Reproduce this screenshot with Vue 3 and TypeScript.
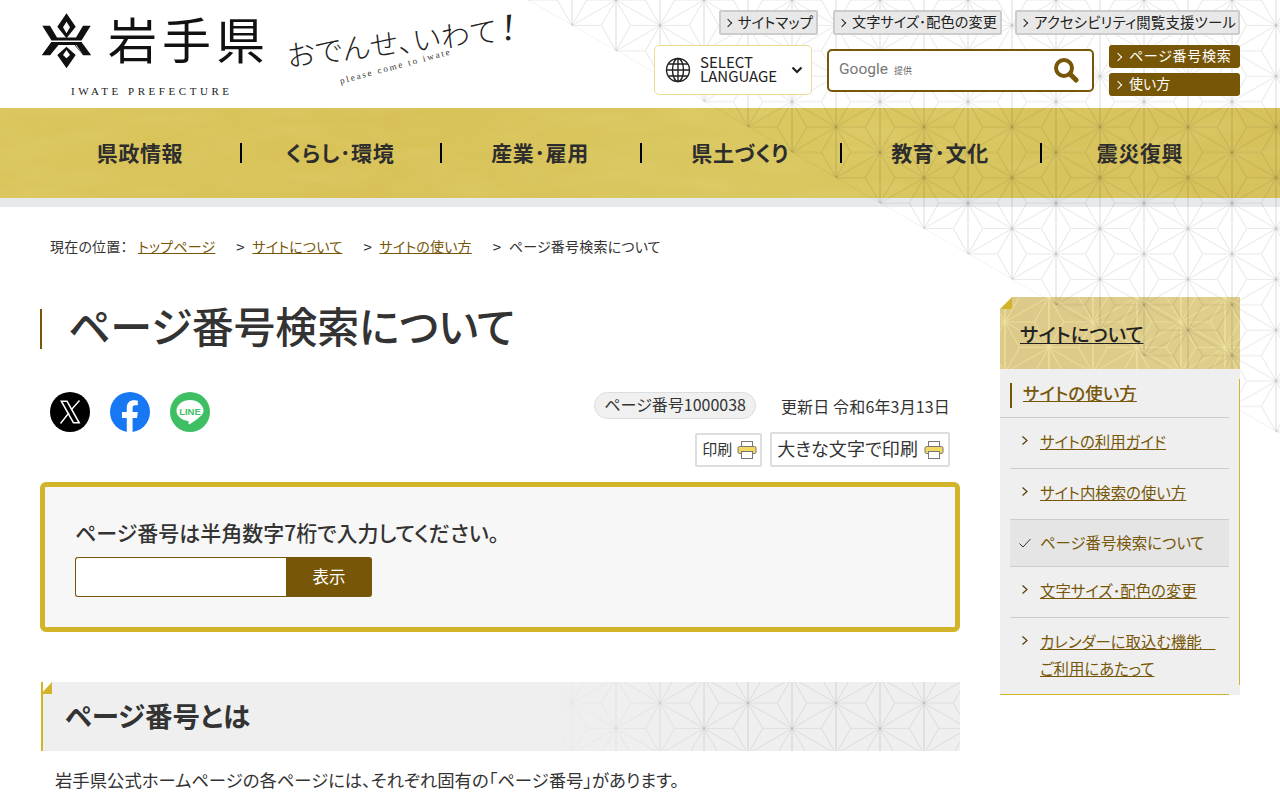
<script setup lang="ts">
const nav: string[] = ['県政情報', 'くらし･環境', '産業･雇用', '県土づくり', '教育･文化', '震災復興']
const sideItems: { label: string[]; current?: boolean }[] = [
  { label: ['サイトの利用ガイド'] },
  { label: ['サイト内検索の使い方'] },
  { label: ['ページ番号検索について'], current: true },
  { label: ['文字サイズ･配色の変更'] },
  { label: ['カレンダーに取込む機能    ', 'ご利用にあたって'] },
]
const topLinks: string[] = ['サイトマップ', '文字サイズ･配色の変更', 'アクセシビリティ閲覧支援ツール']
</script>

<template>
  <div class="page">
    <svg class="asanoha" width="1280" height="800" aria-hidden="true">
      <defs>
        <pattern id="asa" width="88" height="50.8" patternUnits="userSpaceOnUse">
          <g fill="none" stroke="#000" stroke-opacity="0.088">
            <path d="M0 0V50.8M88 0V50.8M44 0V50.8" stroke-width="1.6" />
            <path d="M0 0L44 25.4L88 0M0 50.8L44 25.4L88 50.8" />
            <path d="M0 0L14.67 25.4L0 50.8M14.67 25.4H73.33M88 0L73.33 25.4L88 50.8" />
            <path d="M0 0H29.33L44 25.4L29.33 50.8H0M88 0H58.67L44 25.4L58.67 50.8H88" />
          </g>
        </pattern>
      </defs>
      <polygon points="528,0 1280,0 1280,434" fill="url(#asa)" />
    </svg>

    <header class="header">
      <div class="brand">
        <div class="logo">
          <div class="logo-main">
            <svg class="emblem" width="49" height="58" viewBox="0 0 49 58" aria-hidden="true">
              <path fill-rule="evenodd" d="M24.500 1.300L33.700 14.700L24.500 26.300L15.300 14.700ZM24.500 9.700L21 15.300L24.500 21.300L28 15.300Z" />
              <path fill-rule="evenodd" d="M24.500 34.700L33.700 43L24.500 56.300L15.300 43ZM24.500 38L21 43L24.500 46.300L28 43Z" />
              <path d="M0.300 13.700H8L15 25.500H34L41 13.700H48.700L39.500 28.500H9.500Z" />
              <path d="M9.500 30H39.500V33H33.500L41 43H49V43.300H41L32.500 33H16.500L8 43.300H0L9.500 30Z" />
              <path d="M9.500 30H16.500L8 43H0Z" />
              <path d="M39.500 30H32.500L41 43H49Z" />
            </svg>
            <span class="logo-name">岩手県</span>
          </div>
          <div class="logo-sub">IWATE PREFECTURE</div>
        </div>
        <div class="catch">
          <div class="catch-main">おでんせ、いわて<i>!</i></div>
          <div class="catch-sub">please come to iwate</div>
        </div>
      </div>

      <div class="tools">
        <div class="top-links">
          <a v-for="l in topLinks" :key="l" class="top-link"><span class="chev"></span>{{ l }}</a>
        </div>
        <div class="tool-row">
          <div class="lang">
            <svg width="26" height="26" viewBox="0 0 26 26" fill="none" stroke="#222" stroke-width="1.4" aria-hidden="true">
              <circle cx="13" cy="13" r="11.500" />
              <ellipse cx="13" cy="13" rx="5.500" ry="11.500" />
              <path d="M13 1.500V24.500M1.500 13H24.500M3.200 7H22.800M3.200 19H22.800" />
            </svg>
            <span class="lang-text">SELECT<br />LANGUAGE</span>
            <svg class="lang-caret" width="12" height="9" viewBox="0 0 12 9" fill="none" stroke="#222" stroke-width="2.200" aria-hidden="true">
              <path d="M1.500 1.500L6 6L10.500 1.500" />
            </svg>
          </div>
          <div class="search">
            <span class="google">Google</span><span class="teikyo">提供</span>
            <svg class="loupe" width="26" height="26" viewBox="0 0 26 26" fill="none" stroke="#775707" aria-hidden="true">
              <circle cx="11" cy="11" r="8" stroke-width="4" />
              <path d="M17 17L23 23" stroke-width="5" stroke-linecap="round" />
            </svg>
          </div>
          <div class="mini-btns">
            <a class="mini-btn wide"><span class="chev light"></span>ページ番号検索</a>
            <a class="mini-btn"><span class="chev light"></span>使い方</a>
          </div>
        </div>
      </div>
    </header>

    <nav class="nav">
      <svg class="nav-tex" width="1280" height="90" aria-hidden="true">
        <filter id="leaf" x="0" y="0" width="100%" height="100%">
          <feTurbulence type="fractalNoise" baseFrequency="0.012 0.05" numOctaves="4" seed="7" />
          <feColorMatrix type="matrix" values="0 0 0 0 1  0 0 0 0 0.95  0 0 0 0 0.6  1.4 0 0 0 -0.55" />
        </filter>
        <rect width="1280" height="90" filter="url(#leaf)" opacity="0.12" />
      </svg>
      <a v-for="n in nav" :key="n" class="nav-item"><span>{{ n }}</span></a>
    </nav>
    <div class="nav-under"></div>

    <div class="crumbs">
      <span class="crumb-label">現在の位置：</span>
      <a class="first">トップページ</a>
      <span class="sep">&gt;</span><a>サイトについて</a>
      <span class="sep">&gt;</span><a>サイトの使い方</a>
      <span class="sep">&gt;</span><span>ページ番号検索について</span>
    </div>

    <div class="columns">
      <main class="main">
        <h1 class="title">ページ番号検索について</h1>

        <div class="meta">
          <div class="sns">
            <svg width="40" height="40" viewBox="0 0 40 40" aria-hidden="true">
              <circle cx="20" cy="20" r="20" fill="#000" />
              <path d="M10 8.500H17.500L30.500 31.500H23ZM12.700 10L23.900 30H27.800L16.600 10Z" fill="#fff" fill-rule="evenodd" />
              <path d="M29.500 8.500L21.300 17.800M19 20.800L10.500 31.500" stroke="#fff" stroke-width="1.400" fill="none" />
            </svg>
            <svg width="40" height="40" viewBox="0 0 40 40" aria-hidden="true">
              <circle cx="20" cy="20" r="20" fill="#1877f2" />
              <path d="M16.800 40V26H12V20H16.800V15.600C16.800 10.800 19.600 8.200 24 8.200C26 8.200 27.800 8.500 27.800 8.500V13.200H25.400C23 13.200 22.600 14.600 22.600 16V20H27.800L27 26H22.600V40Z" fill="#fff" />
            </svg>
            <svg width="40" height="40" viewBox="0 0 40 40" aria-hidden="true">
              <circle cx="20" cy="20" r="20" fill="#3fbf64" />
              <path d="M20 8C12.800 8 6.500 12.700 6.500 18.800C6.500 24 11.600 28.200 17.800 29C18.800 29.200 18.700 30.200 18.500 31.500C18.400 32.300 19 32.500 19.700 32.100C21.500 31 27 27.600 30 24.700C32.300 22.700 33.500 20.900 33.500 18.800C33.500 12.700 27.200 8 20 8Z" fill="#fff" />
              <text x="20" y="22.500" class="line-text">LINE</text>
            </svg>
          </div>
          <div class="meta-right">
            <div class="meta-row">
              <span class="pill">ページ番号1000038</span>
              <span class="updated">更新日 令和6年3月13日</span>
            </div>
            <div class="print-row">
              <a class="print small"><span class="print-label">印刷</span>
                <svg width="20" height="20" viewBox="0 0 20 20" aria-hidden="true">
                  <rect x="4.500" y="1.500" width="11" height="6" fill="#fff" stroke="#777" />
                  <rect x="1" y="6.500" width="18" height="7" rx="1.500" fill="#f2d860" stroke="#777" />
                  <rect x="4.500" y="11.500" width="11" height="7" fill="#fff" stroke="#777" />
                </svg>
              </a>
              <a class="print big"><span class="print-label">大きな文字で印刷</span>
                <svg width="20" height="20" viewBox="0 0 20 20" aria-hidden="true">
                  <rect x="4.500" y="1.500" width="11" height="6" fill="#fff" stroke="#777" />
                  <rect x="1" y="6.500" width="18" height="7" rx="1.500" fill="#f2d860" stroke="#777" />
                  <rect x="4.500" y="11.500" width="11" height="7" fill="#fff" stroke="#777" />
                </svg>
              </a>
            </div>
          </div>
        </div>

        <section class="box">
          <p class="box-label">ページ番号は半角数字7桁で入力してください。</p>
          <div class="box-form">
            <input class="box-input" type="text" />
            <button class="box-btn" type="button">表示</button>
          </div>
        </section>

        <h2 class="sub">
          <svg class="sub-bg" width="430" height="69" aria-hidden="true">
            <defs>
              <pattern id="asa2" x="42" y="21" width="88" height="50.8" patternUnits="userSpaceOnUse">
                <g fill="none" stroke="#000" stroke-opacity="0.07">
                  <path d="M0 0V50.8M88 0V50.8M44 0V50.8" stroke-width="1.6" />
                  <path d="M0 0L44 25.4L88 0M0 50.8L44 25.4L88 50.8" />
                  <path d="M0 0L14.67 25.4L0 50.8M14.67 25.4H73.33M88 0L73.33 25.4L88 50.8" />
                  <path d="M0 0H29.33L44 25.4L29.33 50.8H0M88 0H58.67L44 25.4L58.67 50.8H88" />
                </g>
              </pattern>
              <linearGradient id="fade2" x1="0" x2="1" y1="0" y2="0">
                <stop offset="0" stop-color="#fff" stop-opacity="0" />
                <stop offset="0.45" stop-color="#fff" stop-opacity="1" />
              </linearGradient>
              <mask id="mask2"><rect width="430" height="69" fill="url(#fade2)" /></mask>
            </defs>
            <rect width="430" height="69" fill="url(#asa2)" mask="url(#mask2)" />
          </svg>
          <span class="sub-corner"></span>
          <span class="sub-text">ページ番号とは</span>
        </h2>
        <p class="body-text">岩手県公式ホームページの各ページには、それぞれ固有の「ページ番号」があります。</p>
      </main>

      <aside class="side">
        <div class="side-head">
          <svg class="side-tex" width="240" height="72" aria-hidden="true">
            <defs>
              <pattern id="asa3" x="5" y="25" width="88" height="50.8" patternUnits="userSpaceOnUse">
                <g fill="none" stroke="#f0e29e" stroke-opacity="0.75">
                  <path d="M0 0V50.8M88 0V50.8M44 0V50.8" stroke-width="1.6" />
                  <path d="M0 0L44 25.4L88 0M0 50.8L44 25.4L88 50.8" />
                  <path d="M0 0L14.67 25.4L0 50.8M14.67 25.4H73.33M88 0L73.33 25.4L88 50.8" />
                  <path d="M0 0H29.33L44 25.4L29.33 50.8H0M88 0H58.67L44 25.4L58.67 50.8H88" />
                </g>
              </pattern>
            </defs>
            <rect width="240" height="72" fill="url(#asa3)" />
          </svg>
          <span class="side-corner"></span>
          <a>サイトについて</a>
        </div>
        <div class="side-body">
          <div class="side-sub"><a>サイトの使い方</a></div>
          <ul class="side-list">
            <li v-for="item in sideItems" :key="item.label[0]" :class="{ current: item.current }">
              <svg v-if="item.current" class="mark" width="14" height="12" viewBox="0 0 14 12" fill="none" stroke="#333" stroke-width="1" aria-hidden="true"><path d="M1.500 6.500L5 10L12.500 2" /></svg>
              <svg v-else class="mark" width="8" height="12" viewBox="0 0 8 12" fill="none" stroke="#553d05" stroke-width="1.200" aria-hidden="true"><path d="M1.500 1.500L6 5.500L1.500 9.500" /></svg>
              <span class="side-label">
                <template v-if="item.current">{{ item.label[0] }}</template>
                <template v-else><a v-for="t in item.label" :key="t">{{ t }}</a></template>
              </span>
            </li>
          </ul>
        </div>
      </aside>
    </div>
  </div>
</template>

<style>
html, body { margin: 0; background: #fff; }
</style>

<style scoped>
.page {
  position: relative;
  width: 1280px;
  height: 800px;
  overflow: hidden;
  background: #fff;
  color: #333;
  font-family: "Noto Sans CJK JP", "Noto Sans", sans-serif;
  font-feature-settings: "palt";
}
a { color: inherit; }
.asanoha { position: absolute; left: 0; top: 0; z-index: 1; pointer-events: none; }

.header {
  position: relative;
  z-index: 2;
  height: 108px;
  display: flex;
  justify-content: space-between;
  padding: 0 40px 0 42px;
  box-sizing: border-box;
}
.brand { display: flex; align-items: flex-start; }
.logo { width: 226px; padding-top: 12px; }
.logo-main { display: flex; align-items: center; gap: 17px; height: 58px; }
.emblem { fill: #111; flex: none; }
.logo-name {
  font-size: 49px; font-weight: 400; color: #111; line-height: 58px; margin-top: -7px;
  letter-spacing: 5px; font-feature-settings: normal; white-space: nowrap;
}
.logo-sub {
  margin: 14px 0 0 29px;
  font: 11px/14px "Liberation Serif", serif;
  letter-spacing: 3.550px; color: #222; white-space: nowrap;
}
.catch { position: relative; margin-left: 19px; width: 240px; height: 100px; }
.catch-main {
  position: absolute; left: 0; top: 36px;
  font-size: 29px; font-weight: 300; color: #222; line-height: 36px;
  transform: rotate(-7deg); transform-origin: left center; white-space: nowrap; letter-spacing: 0.5px;
}
.catch-main i { font-family: "Liberation Serif", serif; font-size: 38px; margin-left: 5px; }
.catch-sub {
  position: absolute; left: 53px; top: 75px;
  font: 9px/12px "Liberation Serif", serif; letter-spacing: 2px; color: #333;
  transform: rotate(-15deg); transform-origin: left center; white-space: nowrap;
}

.tools { display: flex; flex-direction: column; align-items: flex-end; padding-top: 10px; }
.top-links { display: flex; gap: 14px; }
.top-link {
  display: flex; align-items: center; height: 25px; box-sizing: border-box;
  background: #e8e8e8; border: 2px solid #ccc; border-radius: 2px;
  padding: 0 3px 3px 2px; font-size: 14.400px; letter-spacing: 0.05px; color: #222; white-space: nowrap;
}
.top-link:nth-child(2) { margin-left: 1px; font-size: 14.200px; }
.top-link:nth-child(3) { margin-left: -1px; letter-spacing: 0.18px; padding-right: 2px; }
.chev {
  width: 5px; height: 5px; border-top: 1px solid #222; border-right: 1px solid #222;
  transform: rotate(45deg); margin: 0 6px 0 0; flex: none;
}
.top-link .chev { margin: 3px 7px 0 2px; }
.chev.light { border-color: #fff; }
.tool-row { display: flex; align-items: flex-start; margin-top: 10px; }
.lang {
  display: flex; align-items: center; width: 158px; height: 50px; box-sizing: border-box;
  background: #fff; border: 1px solid #ecdc94; border-radius: 5px; padding-left: 10px;
}
.lang-text { margin: -3px 0 0 9px; font-size: 15px; line-height: 14px; color: #222; width: 91px; }
.lang-caret { margin-left: 0; }
.search {
  position: relative; display: flex; align-items: center;
  width: 267px; height: 43px; box-sizing: border-box; margin: 4px 15px 0 15px;
  background: #fff; border: 2px solid #775707; border-radius: 5px; padding: 0 0 3px 10px;
}
.google { font: 15.500px Roboto, sans-serif; color: #777; }
.teikyo { font-size: 9px; color: #666; margin-left: 6px; padding-top: 3px; }
.loupe { position: absolute; right: 13px; top: 6px; }
.mini-btns { display: flex; flex-direction: column; gap: 5px; }
.mini-btn {
  display: flex; align-items: center; width: 131px; height: 23px; box-sizing: border-box;
  background: #775707; color: #fff; border-radius: 3px; padding: 0 0 3px 6px; font-size: 14px;
}
.mini-btn .chev { margin: 3px 8px 0 0; }
.mini-btn.wide { letter-spacing: 0.7px; }

.nav {
  position: relative;
  height: 90px;
  padding: 0 40px;
  display: flex;
  background: linear-gradient(100deg, #dac55c 0%, #d8c258 30%, #dac760 60%, #d6c15b 100%);
}
.nav-tex { position: absolute; left: 0; top: 0; }
.nav-item {
  position: relative; z-index: 2;
  width: 200px; display: flex; align-items: center; justify-content: center; padding-bottom: 2px; box-sizing: border-box;
  font-size: 21px; font-weight: 700; color: #2d2d2d; letter-spacing: 0.6px;
}
.nav-item:not(:last-child)::after {
  content: ""; position: absolute; right: -2px; top: 35px; width: 2px; height: 20px; background: #000;
}
.nav-under { height: 9px; background: #e6eaea; }

.crumbs {
  position: relative; z-index: 2;
  display: flex; align-items: center;
  padding: 30px 0 0 50px; height: 19px;
  font-size: 14px; letter-spacing: 0.2px; line-height: 19px; color: #333; white-space: nowrap;
}
.crumbs a { color: #775707; text-decoration: underline; }
.crumb-label { width: 88px; }
.crumbs .sep { display: block; width: 16px; margin-left: 21px; font-size: 15px; }

.columns {
  display: flex; justify-content: space-between; padding: 41px 40px 0;
}
.main { width: 920px; }
.title {
  margin: 12px 0 0; padding-left: 26px; height: 40px;
  border-left: 2px solid #775707; letter-spacing: -0.2px;
  font-size: 42px; line-height: 32px; font-weight: 500; color: #333; white-space: nowrap;
}
.meta { display: flex; justify-content: space-between; margin-top: 43px; padding: 0 10px; height: 90px; }
.sns { display: flex; gap: 20px; align-items: flex-start; }
.line-text { font: 700 9.500px "Liberation Sans", sans-serif; fill: #3fbf64; text-anchor: middle; }
.meta-right { display: flex; flex-direction: column; align-items: flex-end; }
.meta-row { display: flex; align-items: center; height: 27px; }
.pill {
  box-sizing: border-box; height: 27px; padding: 0 9px; line-height: 23px;
  background: #f0f0f0; border: 1px solid #ddd; border-radius: 14px; font-size: 16px; color: #333;
}
.updated { margin-left: 25px; font-size: 16px; letter-spacing: 0.15px; color: #333; }
.print-row { display: flex; gap: 8px; margin-top: 13px; align-items: center; }
.print {
  display: flex; align-items: center; box-sizing: border-box; height: 35px;
  background: #fff; border: 2px solid #ddd; border-radius: 2px; color: #333; white-space: nowrap;
}
.print-label { margin-top: -3px; }
.print.small { font-size: 15px; padding: 0 3px 0 5px; gap: 5px; height: 34px; }
.print.big { font-size: 18px; padding: 0 4px 0 5px; gap: 6px; letter-spacing: 0.1px; }

.box {
  box-sizing: border-box; height: 150px;
  background: #f7f7f7; border: 5px solid #d2b42a; border-radius: 6px;
  padding: 29px 30px 0;
}
.box-label { margin: 0; font-size: 21px; line-height: 32px; font-weight: 500; color: #333; white-space: nowrap; }
.box-form { display: flex; margin-top: 9px; }
.box-input {
  box-sizing: border-box; width: 211px; height: 40px; padding: 0;
  background: #fff; border: 1px solid #775707; border-right: 0; border-radius: 3px 0 0 3px; outline: none;
}
.box-btn {
  width: 86px; height: 40px; padding: 0 0 2px; border: 0; border-radius: 0 3px 3px 0;
  background: #775707; color: #fff; font: inherit; font-size: 16.500px;
}

.sub {
  position: relative; margin: 50px 0 0 1px; height: 69px;
  background: #efefef; border-left: 2px solid #d2b42a;
  box-sizing: border-box; display: flex; align-items: center; padding: 0 0 4px 22px;
  overflow: hidden;
}
.sub-bg { position: absolute; right: 0; top: 0; }
.sub-corner {
  position: absolute; left: -2px; top: 0; width: 0; height: 0;
  border-style: solid; border-width: 0 0 12px 11px;
  border-color: transparent transparent #d2b42a transparent;
  background: #fff;
}
.sub-text { position: relative; font-size: 27.500px; font-weight: 700; color: #333; }
.body-text { margin: 16px 0 0 15px; font-size: 17.350px; line-height: 26px; color: #333; white-space: nowrap; }

.side { width: 240px; }
.side-head {
  position: relative; height: 72px; box-sizing: border-box; padding: 23px 0 0 20px;
  background: linear-gradient(90deg, #dcc98a, #e0cf8c); font-size: 19.500px; line-height: 27px; font-weight: 500; color: #222;
}
.side-tex { position: absolute; left: 0; top: 0; }
.side-head a { position: relative; z-index: 2; text-decoration: underline; }
.side-corner {
  position: absolute; left: 0; top: 0; width: 0; height: 0;
  border-style: solid; border-width: 0 0 12px 12px;
  border-color: transparent transparent #d2b42a transparent;
  background: #fff;
}
.side-body {
  position: relative; z-index: 2; background: #efefef; height: 326px; box-sizing: border-box;
  padding: 0 11px 0 0;
}
.side-body::after {
  content: ""; position: absolute; right: 0; top: 10px; bottom: 10px; width: 1px; background: #d2b42a;
}
.side-sub {
  height: 49px; box-sizing: border-box; padding: 14px 0 0 10px;
  border-bottom: 1px solid #ccc; font-size: 17.500px; font-weight: 500; line-height: 20px; color: #775707;
}
.side-sub a {
  display: block; padding-left: 11px; border-left: 2px solid #775707;
  height: 25px; text-decoration: underline;
}
.side-list { list-style: none; margin: 0; padding: 0; border-bottom: 1px solid #d2b42a; }
.side-list li {
  position: relative; display: flex; margin-left: 10px; padding: 10px 0 13px 30px; box-sizing: border-box;
  font-size: 15.400px; line-height: 27px; color: #775707; border-bottom: 1px solid #ccc;
}
.side-list li:last-child { border-bottom: 0; padding-bottom: 12px; }
.side-list li.current { background: #e5e5e5; padding: 9px 0 10px 30px; }
.side-list a { display: block; text-decoration: underline; white-space: pre; }
.mark { position: absolute; left: 11px; top: 17px; }
.current .mark { left: 8px; top: 17px; }
</style>
